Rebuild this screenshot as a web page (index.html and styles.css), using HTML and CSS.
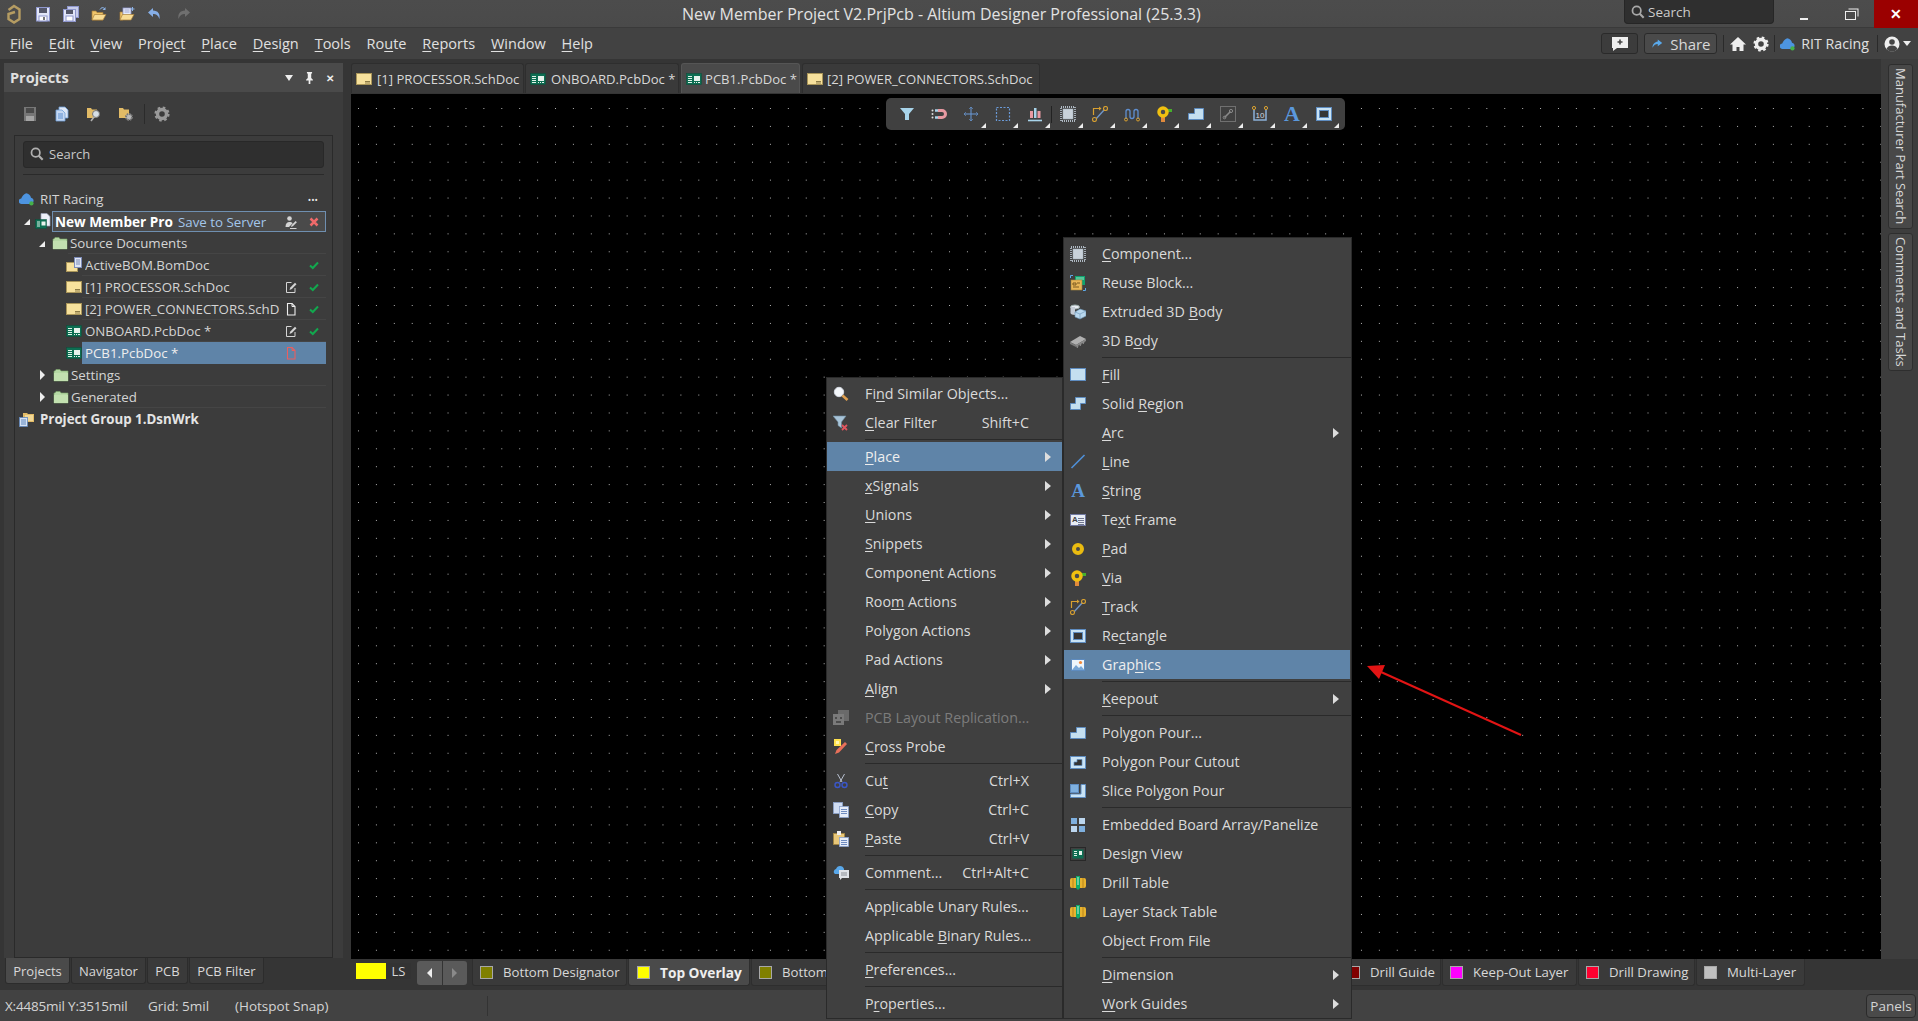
FILE: index.html
```html
<!DOCTYPE html>
<html lang="en">
<head>
<meta charset="utf-8">
<title>New Member Project V2.PrjPcb - Altium Designer Professional (25.3.3)</title>
<link rel="stylesheet" href="styles.css">
</head>
<body>
<svg class="defs" aria-hidden="true">
  <symbol id="logo" viewBox="0 0 14 20"><path d="M1.500 6 7 2l5.500 3.500v9.500L7 18.500 1.500 15v-5L8 8" fill="none" stroke="#b59c62" stroke-width="2.400"/></symbol>
  <symbol id="save" viewBox="0 0 16 16"><rect x="1.500" y="1.500" width="13" height="13.500" fill="#e2e6f8" stroke="#8e96cc"/><rect x="4" y="2" width="8" height="5" fill="#55586a"/><rect x="4" y="10" width="8" height="5" fill="#fff" stroke="#8e96cc"/><rect x="8" y="11" width="2" height="3" fill="#777"/></symbol>
  <symbol id="saveall" viewBox="0 0 16 16"><rect x="4.500" y=".5" width="11" height="11" fill="#c8cdea" stroke="#8e96cc"/><rect x=".5" y="3.500" width="12" height="12" fill="#e2e6f8" stroke="#8e96cc"/><rect x="3" y="4" width="7" height="4" fill="#55586a"/><rect x="3" y="10" width="7" height="5" fill="#fff" stroke="#8e96cc"/></symbol>
  <symbol id="fopen" viewBox="0 0 16 16"><path d="M1 14V5h4l1 1.500h6V14Z" fill="#f0c56a" stroke="#a9803a" stroke-width=".7"/><path d="M1 14l2.500-5.500H15L12 14Z" fill="#f8dc95" stroke="#a9803a" stroke-width=".7"/><path d="M9 3.500c1-2 3-2.500 4.500-1" fill="none" stroke="#8cb4e8" stroke-width="1"/><path d="M14.500 1v3h-3Z" fill="#8cb4e8"/></symbol>
  <symbol id="fopen2" viewBox="0 0 16 16"><path d="M1 14V6h3v8Z" fill="#f0c56a" stroke="#a9803a" stroke-width=".7"/><rect x="4" y="2" width="8" height="8" fill="#e8ecf8" stroke="#8e96cc" stroke-width=".8"/><path d="M5.500 4h5M5.500 6h5" stroke="#8e96cc" stroke-width=".8"/><path d="M1 14l2.500-5.500H15L12 14Z" fill="#f8dc95" stroke="#a9803a" stroke-width=".7"/><path d="M13.500 1v4M11.500 3h4" stroke="#8cb4e8"/></symbol>
  <symbol id="undo" viewBox="0 0 16 16"><path d="M6 2 1 6.500 6 11V8c3 0 5 1 6.500 5 .8-5-1.500-8.500-6.500-8.500Z" fill="#86aee6"/></symbol>
  <symbol id="redo" viewBox="0 0 16 16"><path d="M10 2l5 4.500L10 11V8c-3 0-5 1-6.500 5-.8-5 1.500-8.500 6.500-8.500Z" fill="#6f6f6f"/></symbol>
  <symbol id="psave" viewBox="0 0 16 16"><rect x="2" y="1" width="12" height="14" fill="#777"/><rect x="4" y="2" width="8" height="5" fill="#4a4a4a"/><rect x="4" y="10" width="8" height="5" fill="#a5a5a5"/></symbol>
  <symbol id="pdocs" viewBox="0 0 16 16"><path d="M5 1h6l3 3v8H5Z" fill="#dfe8f6" stroke="#6e9fd8" stroke-width=".8"/><path d="M2 4h6l3 3v8H2Z" fill="#c5d8f2" stroke="#6e9fd8" stroke-width=".8"/><path d="M4 8h5M4 10h5M4 12h5" stroke="#5c8fd0"/></symbol>
  <symbol id="fsearch" viewBox="0 0 16 16"><path d="M1 12V2h4l1 1.500h5V12Z" fill="#e2bb66"/><circle cx="10" cy="8" r="3.500" fill="#d6dfe6" stroke="#777"/><path d="M8 11 5 15" stroke="#b0b0b0" stroke-width="1.600"/></symbol>
  <symbol id="fgear" viewBox="0 0 16 16"><path d="M1 12V2h4l1 1.500h5V12Z" fill="#e2bb66"/><circle cx="11" cy="11" r="3" fill="#bbb" stroke="#777" stroke-width="2" stroke-dasharray="1.500 .8"/><circle cx="11" cy="11" r="1.500" fill="#bbb"/></symbol>
  <symbol id="gear" viewBox="0 0 16 16"><circle cx="8" cy="8" r="4.500" fill="none" stroke="currentColor" stroke-width="3.400"/><circle cx="8" cy="8" r="6.500" fill="none" stroke="currentColor" stroke-width="2.200" stroke-dasharray="2.600 2.500"/></symbol>
  <symbol id="search" viewBox="0 0 16 16"><circle cx="6.500" cy="6.500" r="4.800" fill="none" stroke="currentColor" stroke-width="2"/><path d="M10 10l4.500 4.500" stroke="currentColor" stroke-width="2.400"/></symbol>
  <symbol id="cloud" viewBox="0 0 18 16"><path d="M3 13.500a3 3 0 0 1-.5-6C3.500 5 5 2.500 8 1.500c3 0 5 2.500 5.500 5a3.500 3.500 0 0 1 2.500 5 2.500 2.500 0 0 1-1.500 2Z" fill="#4d94e0"/><circle cx="14" cy="13" r="2.400" fill="#45b04a"/></symbol>
  <symbol id="pcb" viewBox="0 0 16 16"><rect x=".5" y="2.500" width="15" height="11" fill="#0d6e52" stroke="#0b4e3a" stroke-width=".5"/><path d="M2 5h4v1H2Zm0 2h4v1H2Zm0 2h4v1H2Zm0 2h4v1H2Z" fill="#dff2e8"/><rect x="8" y="5" width="6" height="5" fill="#e6f2ec"/><path d="M8 11.500h1M10 11.500h1M12 11.500h2" stroke="#e6f2ec"/></symbol>
  <symbol id="sch" viewBox="0 0 16 16"><rect x=".5" y="2.500" width="15" height="11" fill="#f7e19c" stroke="#a99559"/><path d="M9 10.500h5M9 12h5" stroke="#8c7b46"/></symbol>
  <symbol id="bom" viewBox="0 0 16 16"><rect x=".5" y="5.500" width="11" height="9" fill="#f7e19c" stroke="#a99559"/><rect x="8.500" y=".5" width="7" height="10" fill="#dfe6f4" stroke="#7d8bb8"/><path d="M10 3h4M10 5h4M10 7h4" stroke="#7d8bb8"/></symbol>
  <symbol id="prj" viewBox="0 0 16 16"><path d="M6 .5h6l3 3V13H6Z" fill="#eef0f8" stroke="#9aa2b8" stroke-width=".7"/><rect x=".5" y="6.500" width="11" height="9" fill="#0d6e52" stroke="#0b4e3a" stroke-width=".5"/><path d="M2 8.500h3v1H2Zm0 2h3v1H2Zm0 2h3v1H2Z" fill="#dff2e8"/><rect x="6.500" y="8.500" width="4" height="4" fill="#e6f2ec"/></symbol>
  <symbol id="grp" viewBox="0 0 16 16"><path d="M4 10V2h4l1 1h6v8H4Z" fill="#e2bb66"/><rect x="6" y="4" width="8" height="6" fill="#f2d896"/><rect x=".5" y="6.500" width="8" height="9" fill="#d5e2f4" stroke="#5f86bb" stroke-width=".8"/><path d="M2 9h5M2 11h5M2 13h5" stroke="#5f86bb"/></symbol>
  <symbol id="folder" viewBox="0 0 16 16"><path d="M1 14V4h1l1-1.500h4L8 4h7v10Z" fill="#b5d8a4" stroke="#7ba56a" stroke-width=".6"/><path d="M1 14V6h14v8Z" fill="#c2e0b0"/></symbol>
  <symbol id="check" viewBox="0 0 16 16"><path d="M4 8.500 6.800 11 12 5.500" fill="none" stroke="#12a84e" stroke-width="2"/></symbol>
  <symbol id="pendoc" viewBox="0 0 16 16"><path d="M8.500 3.500H3.500v10h8.500V9" fill="none" stroke="#d4d4d4" stroke-width="1"/><path d="M6.500 11l.8-2.500L12 3.800l1.500 1.500L8.800 10Z" fill="#d4d4d4"/></symbol>
  <symbol id="doc" viewBox="0 0 16 16"><path d="M4.500 2.500h4.500l3 3v8.500h-7.500Z" fill="none" stroke="currentColor" stroke-width="1.100"/><path d="M9 2.500V5.500h3" fill="none" stroke="currentColor" stroke-width="1"/></symbol>
  <symbol id="userpen" viewBox="0 0 16 16"><circle cx="6.500" cy="4.500" r="2.300" fill="#d4d4d4"/><path d="M2.500 13c0-3.500 1.500-5 4-5 1.500 0 2.500.4 3.200 1.200L6 13Z" fill="#d4d4d4"/><path d="M8 13l.6-2 4-4 1.300 1.300-4 4Z" fill="#d4d4d4"/><path d="M7 14.500h6.500" stroke="#d4d4d4"/></symbol>
  <symbol id="xred" viewBox="0 0 16 16"><path d="M4.500 4.500l7 7M11.500 4.500l-7 7" stroke="#ef6a6a" stroke-width="2.500"/></symbol>
  <symbol id="find" viewBox="0 0 16 16"><circle cx="6" cy="6" r="4.700" fill="#f4f7fb" stroke="#d6dbe4"/><path d="M9.500 9.500l5 4.500" stroke="#e0a050" stroke-width="2.600"/></symbol>
  <symbol id="clearf" viewBox="0 0 16 16"><path d="M0 1h13L8.500 7v6L5 10.500V7Z" fill="#a8c4d8" stroke="#6d8ba0" stroke-width=".6"/><path d="M9 10l5 5M14 10l-5 5" stroke="#e0555f" stroke-width="1.800"/></symbol>
  <symbol id="probe" viewBox="0 0 16 16"><path d="M2 15l1.500-4L12 3l2 2-8 8.500Z" fill="#e8705a"/><rect x="1" y="0" width="7" height="7" fill="#ffe14d"/><rect x="3" y="2" width="3" height="3" fill="#fff6b0"/></symbol>
  <symbol id="cut" viewBox="0 0 16 16"><path d="M4.500 1 9 9M11.500 1 7 9" stroke="#b8c0d0" stroke-width="1"/><circle cx="4.500" cy="12" r="2.500" fill="none" stroke="#3a56c8" stroke-width="1.400"/><circle cx="11.500" cy="12" r="2.500" fill="none" stroke="#3a56c8" stroke-width="1.400"/></symbol>
  <symbol id="copy" viewBox="0 0 16 16"><rect x=".5" y=".5" width="9" height="11" fill="#cfdcf2" stroke="#8aa2cc" stroke-width=".8"/><rect x="6.500" y="4.500" width="9" height="11" fill="#e6edf9" stroke="#8aa2cc" stroke-width=".8"/><path d="M8 7.500h6M8 9.500h6M8 11.500h6" stroke="#6f8cc0"/></symbol>
  <symbol id="paste" viewBox="0 0 16 16"><rect x=".5" y="2.500" width="11" height="11" fill="#e8c779" stroke="#a5853d" stroke-width=".8"/><rect x="4" y="0" width="4" height="4" fill="#eee"/><rect x="6.500" y="6.500" width="9" height="9" fill="#e6edf9" stroke="#8aa2cc" stroke-width=".8"/><path d="M8 9.500h6M8 11.500h6M8 13.500h6" stroke="#6f8cc0"/></symbol>
  <symbol id="comment" viewBox="0 0 16 16"><path d="M1 8a3 3 0 0 1 2-4c.8-2 2-3 4-3s3.500 1 4 3v5H2Z" fill="#59a8ea"/><path d="M6 5h10v8h-7l-2 2v-2H6Z" fill="#dfe3e8"/><path d="M8 8h6M8 10h6" stroke="#8a8f96"/></symbol>
  <symbol id="rep" viewBox="0 0 16 16"><rect x="5" y="0" width="11" height="11" fill="#6a6a6a"/><rect x="0" y="4" width="11" height="11" fill="#7a7a7a"/><path d="M2 7h2v2H2Zm5 0h2v2H7ZM3 11h5v2H3Z" fill="#4c4c4c"/></symbol>
  <symbol id="comp" viewBox="0 0 16 16"><rect x="3" y="3" width="10" height="10" fill="#c9d2da" stroke="#a9b4be" stroke-width=".6"/><rect x="1" y="1" width="14" height="14" fill="none" stroke="#aeb8c2" stroke-width="1.800" stroke-dasharray="1 1"/></symbol>
  <symbol id="reuse" viewBox="0 0 16 16"><rect x="5" y="1" width="10" height="9" fill="#0fa36f"/><path d="M7 2v3M9 2v3M11 2v3M13 2v3" stroke="#9fe8c6"/><rect x="1" y="5" width="11" height="10" fill="#e8b658" stroke="#a5853d" stroke-width=".6"/><path d="M3 8h3v2H3Zm4 0h3M3 12h6" stroke="#7a5a20" fill="none"/><path d="M.5 3V.5H3M13 15.500h2.500V13" fill="none" stroke="#5ea8e8"/></symbol>
  <symbol id="extr" viewBox="0 0 16 16"><ellipse cx="5" cy="3" rx="4.500" ry="2" fill="#e8ecf2" stroke="#9aa"/><path d="M.5 3v6c0 1 2 2 4.500 2V3Z" fill="#c5ccd6"/><path d="M5 8l5-3 6 2v5l-6 3-5-2Z" fill="#b9d8ee" stroke="#6b93b5" stroke-width=".6"/><path d="M5 8l5 2 6-3M10 10v5" stroke="#6b93b5" stroke-width=".6" fill="none"/></symbol>
  <symbol id="body3d" viewBox="0 0 16 16"><path d="M0 9l10-6 6 3-10 6Z" fill="#b0b0b0"/><path d="M0 9l6 3v2L0 11Z" fill="#7a7a7a"/><path d="M6 12l10-6v2L6 14Z" fill="#8a8a8a"/><path d="M7 15l1-2M10 13l1-2M13 11l1-2" stroke="#9a9a9a"/></symbol>
  <symbol id="fill" viewBox="0 0 16 16"><rect x=".5" y="1.500" width="15" height="12" fill="#c4dff0" stroke="#5e8cc0"/></symbol>
  <symbol id="solid" viewBox="0 0 16 16"><path d="M5.500 1.500h10v6h-5v6H.5v-6h5Z" fill="#c4dff0" stroke="#5e8cc0"/></symbol>
  <symbol id="line" viewBox="0 0 16 16"><path d="M1.500 14 14.500 1" stroke="#4f8fd8" stroke-width="1.600"/></symbol>
  <symbol id="pad" viewBox="0 0 16 16"><circle cx="8" cy="8" r="4" fill="#4a4a4a" stroke="#eabb10" stroke-width="4"/></symbol>
  <symbol id="via" viewBox="0 0 16 16"><rect x="5" y="10" width="4" height="6" fill="#e08a3c"/><rect x="11" y="3" width="5" height="3" fill="#46b02c"/><circle cx="7" cy="6" r="4" fill="#4a4a4a" stroke="#f0c010" stroke-width="3.500"/></symbol>
  <symbol id="track" viewBox="0 0 16 16"><path d="M3 14 13 3" stroke="#6f95c8" stroke-width="1.400"/><circle cx="2.500" cy="13.500" r="2" fill="#444" stroke="#d8a030" stroke-width="1.100"/><circle cx="13.500" cy="2.500" r="2" fill="#444" stroke="#d8a030" stroke-width="1.100"/><path d="M1.500 9V2.500H7" fill="none" stroke="#d8a030" stroke-width="1.200"/><path d="M7 .5v4l2.500-2Z" fill="#d8a030"/></symbol>
  <symbol id="rect" viewBox="0 0 16 16"><rect x=".5" y="1.500" width="15" height="13" fill="#c9e3f5" stroke="#5e8cc0"/><rect x="3.500" y="4.500" width="9" height="7" fill="#353535" stroke="#5e8cc0"/></symbol>
  <symbol id="gfx" viewBox="0 0 16 16"><rect x="1.500" y="2.500" width="13" height="11" fill="#eef6fc" stroke="#5e8cc0"/><circle cx="10.500" cy="5.500" r="1.600" fill="#f28a3c"/><path d="M2 13l4-5 3 3 2-2 3.500 4Z" fill="#78a8d8"/></symbol>
  <symbol id="ppour" viewBox="0 0 16 16"><path d="M.5 13.500v-6h6v-5h9v11Z" fill="#c4dff0" stroke="#5e8cc0"/></symbol>
  <symbol id="pcut" viewBox="0 0 16 16"><rect x=".5" y="2.500" width="15" height="12" fill="#c9e3f5" stroke="#5e8cc0"/><path d="M4 11.500V8h3V5.500h5v6Z" fill="#333" stroke="#5e8cc0" stroke-width=".7"/></symbol>
  <symbol id="slice" viewBox="0 0 16 16"><rect x=".5" y="1.500" width="8" height="8" fill="#7fb0df" stroke="#5e8cc0"/><path d="M11 1.500h4.500v13H.5V11H11Z" fill="#c9e3f5" stroke="#5e8cc0"/></symbol>
  <symbol id="array" viewBox="0 0 16 16"><rect x="1" y="1" width="6" height="6" fill="#7fb0df"/><rect x="9" y="1" width="6" height="6" fill="#bcd6ee"/><rect x="1" y="9" width="6" height="6" fill="#bcd6ee"/><rect x="9" y="9" width="6" height="6" fill="#7fb0df"/></symbol>
  <symbol id="dview" viewBox="0 0 16 16"><rect x=".5" y="1.500" width="15" height="13" fill="none" stroke="#111" stroke-dasharray="1 1"/><rect x="2.500" y="3.500" width="11" height="9" fill="#0d6e52"/><path d="M4 5.500h3M4 7.500h3M4 9.500h3" stroke="#dff2e8"/><rect x="9" y="5" width="3" height="4" fill="#e6f2ec"/></symbol>
  <symbol id="drill" viewBox="0 0 16 16"><rect x="0" y="3" width="16" height="10" rx="2" fill="#e9b32f"/><path d="M3 3v10M13 3v10" stroke="#b8851a"/><path d="M6 1h4v12l-2 2-2-2Z" fill="#0faa6b"/><path d="M7 3h2M7 5h2M7 7h2M7 9h2" stroke="#c8f5e0"/></symbol>
  <symbol id="funnel" viewBox="0 0 16 16"><path d="M1 2h14L10 8v6H6V8Z" fill="#a8d4ea"/></symbol>
  <symbol id="magnet" viewBox="0 0 16 16"><path d="M7 3h4a5 5 0 0 1 0 10H7v-3h4a2 2 0 0 0 0-4H7Z" fill="#e89aa2"/><path d="M4 4.500h3M4 11.500h3" stroke="#a8d4ea" stroke-width="2.600"/><circle cx="1.500" cy="4.500" r="1" fill="#ddd"/><circle cx="1.500" cy="8" r="1" fill="#ddd"/><circle cx="1.500" cy="11.500" r="1" fill="#ddd"/></symbol>
  <symbol id="cross" viewBox="0 0 16 16"><path d="M8 1v14M1 8h14" stroke="#6a9ad8" stroke-width="1"/><path d="M6 3l2-2 2 2M6 13l2 2 2-2M3 6 1 8l2 2M13 6l2 2-2 2" fill="none" stroke="#6a9ad8" stroke-width=".6"/></symbol>
  <symbol id="dash" viewBox="0 0 16 16"><rect x="1.500" y="1.500" width="13" height="13" fill="none" stroke="#6a9ad8" stroke-width="1.200" stroke-dasharray="2 1.500"/></symbol>
  <symbol id="align" viewBox="0 0 16 16"><rect x="3" y="5" width="3" height="7" fill="#e89aa2"/><rect x="7" y="2" width="2.500" height="10" fill="#a8d4ea"/><rect x="10.500" y="5" width="3" height="7" fill="#e89aa2"/><path d="M1 14.500h14" stroke="#a8d4ea" stroke-width="1.600"/></symbol>
  <symbol id="wiggle" viewBox="0 0 16 16"><path d="M2 13V5.500a2 2 0 0 1 4 0v5a2 2 0 0 0 4 0v-5a2 2 0 0 1 4 0V13" fill="none" stroke="#5f8fd0" stroke-width="1.300"/><circle cx="2" cy="13.500" r="1.500" fill="none" stroke="#d8a030"/><circle cx="14" cy="13.500" r="1.500" fill="none" stroke="#d8a030"/></symbol>
  <symbol id="wrench" viewBox="0 0 16 16"><rect x=".5" y=".5" width="15" height="15" fill="none" stroke="#707070"/><path d="M4.500 11.500l6-6" stroke="#8a8a8a" stroke-width="1.600"/><circle cx="11" cy="5" r="1.600" fill="none" stroke="#8a8a8a"/><circle cx="4.500" cy="11.500" r="1.300" fill="none" stroke="#8a8a8a"/></symbol>
  <symbol id="dim" viewBox="0 0 16 16"><path d="M2 3v11h12V3" fill="none" stroke="#8ab0d8" stroke-width="1.500"/><circle cx="2" cy="2" r="1.600" fill="#444" stroke="#d8a030"/><circle cx="14" cy="2" r="1.600" fill="#444" stroke="#d8a030"/><text x="8" y="11.500" font-size="8" fill="#d0d8e0" text-anchor="middle" font-family="Liberation Sans">10</text></symbol>
  <symbol id="home" viewBox="0 0 16 16"><path d="M8 1 0 8.500h2.500V15h4v-4h3v4h4V8.500H16Z" fill="#eee"/></symbol>
  <symbol id="bubble" viewBox="0 0 16 16"><path d="M0 1h16v11H5l-4 3v-3H0Z" fill="#eee"/><path d="M8 3.500v5M5.500 6h5" stroke="#444" stroke-width="1.600"/></symbol>
  <symbol id="share" viewBox="0 0 16 16"><path d="M9 2l6 4.500L9 11V8c-3 0-5 1-7 5 0-5 3-8 7-8.500Z" fill="#59a8ea"/></symbol>
  <symbol id="user" viewBox="0 0 16 16"><circle cx="8" cy="8" r="7.500" fill="#eee"/><circle cx="8" cy="6" r="2.800" fill="#444"/><path d="M2.500 13c1-2.500 3-3.500 5.500-3.500s4.500 1 5.500 3.500a7 7 0 0 1-11 0Z" fill="#444"/></symbol>
</svg>

<header class="titlebar">
  <div class="qa">
    <svg class="q-logo"><use href="#logo"/></svg>
    <svg class="qi q1"><use href="#save"/></svg>
    <svg class="qi"><use href="#saveall"/></svg>
    <svg class="qi"><use href="#fopen"/></svg>
    <svg class="qi"><use href="#fopen2"/></svg>
    <svg class="qi"><use href="#undo"/></svg>
    <svg class="qi"><use href="#redo"/></svg>
  </div>
  <div class="title">New Member Project V2.PrjPcb - Altium Designer Professional (25.3.3)</div>
  <div class="topsearch"><svg class="ic14"><use href="#search"/></svg><span>Search</span></div>
  <div class="winbtn"><span class="w-min"></span></div>
  <div class="winbtn"><span class="w-max"></span></div>
  <div class="winbtn w-close">✕</div>
</header>

<nav class="menubar">
  <div class="menus">
    <span><u>F</u>ile</span><span><u>E</u>dit</span><span><u>V</u>iew</span><span>Proje<u>c</u>t</span><span><u>P</u>lace</span><span><u>D</u>esign</span><span><u>T</u>ools</span><span>Ro<u>u</u>te</span><span><u>R</u>eports</span><span><u>W</u>indow</span><span><u>H</u>elp</span>
  </div>
  <div class="mb-right">
    <button class="mb-btn mb-comment"><svg class="ic16"><use href="#bubble"/></svg></button>
    <button class="mb-btn mb-share"><svg class="ic12"><use href="#share"/></svg>Share</button>
    <i class="mb-sep"></i>
    <svg class="ic16 m-home"><use href="#home"/></svg>
    <svg class="ic16 m-gear"><use href="#gear"/></svg>
    <i class="mb-sep"></i>
    <svg class="ic16 m-cloud"><use href="#cloud"/></svg>
    <span class="mb-rit">RIT Racing</span>
    <i class="mb-sep"></i>
    <svg class="ic16 m-user"><use href="#user"/></svg>
    <span class="caret-d"></span>
  </div>
</nav>

<main class="main">
  <aside class="leftcol">
    <section class="panel">
      <div class="panel-head">
        <span class="panel-title">Projects</span>
        <span class="ph-tri"></span>
        <svg class="ph-pin" viewBox="0 0 10 14"><path d="M2 0h6v1.500L7 2v5l2 2v1H6v4H4v-4H1V9l2-2V2L2 1.500Z" fill="#eee"/></svg>
        <span class="ph-x">✕</span>
      </div>
      <div class="panel-tools">
        <svg class="ic16 pt1"><use href="#psave"/></svg>
        <svg class="ic16 pt"><use href="#pdocs"/></svg>
        <svg class="ic16 pt"><use href="#fsearch"/></svg>
        <svg class="ic16 pt"><use href="#fgear"/></svg>
        <i class="pt-sep"></i>
        <svg class="ic16 pt-gear"><use href="#gear"/></svg>
      </div>
      <div class="inner">
        <div class="psearch"><svg class="ic14"><use href="#search"/></svg><span>Search</span></div>
        <div class="inner-line"></div>
        <div class="tree">
          <div class="row lv0"><svg class="ic16"><use href="#cloud"/></svg><span class="label plain">RIT Racing</span><span class="dots">•••</span></div>
          <div class="row lv1"><span class="tri-open"></span><svg class="ic16 lv1-ic"><use href="#prj"/></svg>
            <div class="selbox"><b class="selname">New Member Pro</b><span class="savesrv">Save to Server</span><svg class="st s1"><use href="#userpen"/></svg><svg class="st s2"><use href="#xred"/></svg></div></div>
          <div class="row lv2"><span class="tri-open"></span><svg class="ic16 lv2-ic"><use href="#folder"/></svg><span class="label">Source Documents</span></div>
          <div class="row lv3"><svg class="ic16"><use href="#bom"/></svg><div class="label"><span class="nm">ActiveBOM.BomDoc</span><i class="st s1"></i><svg class="st s2"><use href="#check"/></svg></div></div>
          <div class="row lv3"><svg class="ic16"><use href="#sch"/></svg><div class="label"><span class="nm">[1] PROCESSOR.SchDoc</span><svg class="st s1"><use href="#pendoc"/></svg><svg class="st s2"><use href="#check"/></svg></div></div>
          <div class="row lv3"><svg class="ic16"><use href="#sch"/></svg><div class="label"><span class="nm">[2] POWER_CONNECTORS.SchD</span><svg class="st s1 c-white"><use href="#doc"/></svg><svg class="st s2"><use href="#check"/></svg></div></div>
          <div class="row lv3"><svg class="ic16"><use href="#pcb"/></svg><div class="label"><span class="nm">ONBOARD.PcbDoc *</span><svg class="st s1"><use href="#pendoc"/></svg><svg class="st s2"><use href="#check"/></svg></div></div>
          <div class="row lv3"><svg class="ic16"><use href="#pcb"/></svg><div class="label sel"><span class="nm">PCB1.PcbDoc *</span><svg class="st s1 c-red"><use href="#doc"/></svg><i class="st s2"></i></div></div>
          <div class="row lv2"><span class="tri-closed"></span><svg class="ic16 lv2-ic"><use href="#folder"/></svg><span class="label">Settings</span></div>
          <div class="row lv2"><span class="tri-closed"></span><svg class="ic16 lv2-ic"><use href="#folder"/></svg><span class="label">Generated</span></div>
          <div class="row lv0"><svg class="ic16"><use href="#grp"/></svg><b class="label plain grpname">Project Group 1.DsnWrk</b></div>
        </div>
      </div>
    </section>
    <div class="ptabs">
      <span class="ptab on pt-a">Projects</span><span class="ptab pt-b">Navigator</span><span class="ptab pt-c">PCB</span><span class="ptab pt-d">PCB Filter</span>
    </div>
  </aside>

  <div class="center">
    <div class="doctabs">
      <div class="dtab d1"><svg class="ic16"><use href="#sch"/></svg><span>[1] PROCESSOR.SchDoc</span></div>
      <div class="dtab d2"><svg class="ic16"><use href="#pcb"/></svg><span>ONBOARD.PcbDoc *</span></div>
      <div class="dtab d3 on"><svg class="ic16"><use href="#pcb"/></svg><span>PCB1.PcbDoc *</span></div>
      <div class="dtab d4"><svg class="ic16"><use href="#sch"/></svg><span>[2] POWER_CONNECTORS.SchDoc</span></div>
    </div>
    <div class="canvas">
      <svg class="griddots" aria-hidden="true"><defs><pattern id="dots" x="7" y="14" width="17.910" height="17.910" patternUnits="userSpaceOnUse"><rect width="1" height="1" fill="#b4b4b4" shape-rendering="crispEdges"/></pattern></defs><rect width="100%" height="100%" fill="url(#dots)"/></svg>
      <div class="cbar">
        <span class="cb"><svg class="ic16"><use href="#funnel"/></svg></span>
        <span class="cb"><svg class="ic16"><use href="#magnet"/></svg></span>
        <span class="cb m"><svg class="ic16"><use href="#cross"/></svg></span>
        <span class="cb m"><svg class="ic16"><use href="#dash"/></svg></span>
        <span class="cb m cb-last"><svg class="ic16"><use href="#align"/></svg></span>
        <i class="cb-sep"></i>
        <span class="cb m"><svg class="ic16"><use href="#comp"/></svg></span>
        <span class="cb m"><svg class="ic16"><use href="#track"/></svg></span>
        <span class="cb m"><svg class="ic16"><use href="#wiggle"/></svg></span>
        <span class="cb m"><svg class="ic16"><use href="#via"/></svg></span>
        <span class="cb m"><svg class="ic16"><use href="#ppour"/></svg></span>
        <span class="cb m"><svg class="ic16"><use href="#wrench"/></svg></span>
        <span class="cb m"><svg class="ic16"><use href="#dim"/></svg></span>
        <span class="cb m"><span class="ic-a big">A</span></span>
        <span class="cb m"><svg class="ic16"><use href="#rect"/></svg></span>
      </div>
    </div>
    <div class="layerbar">
      <span class="curlayer"></span><span class="ls">LS</span>
      <span class="nav"><span class="nav-l"></span><i></i><span class="nav-r"></span></span>
      <span class="ltab lt-a"><i class="sw olive"></i>Bottom Designator</span>
      <span class="ltab lt-b on"><i class="sw yellow"></i>Top Overlay</span>
      <span class="ltab lt-c"><i class="sw olive"></i>Bottom</span>
      <span class="ltab lt-d"><i class="sw dred"></i>Drill Guide</span>
      <span class="ltab lt-e"><i class="sw magenta"></i>Keep-Out Layer</span>
      <span class="ltab lt-f"><i class="sw red"></i>Drill Drawing</span>
      <span class="ltab lt-g"><i class="sw grey"></i>Multi-Layer</span>
    </div>
  </div>

  <aside class="rightcol">
    <div class="vtab v1">Manufacturer Part Search</div>
    <div class="vtab v2">Comments and Tasks</div>
  </aside>
</main>

<footer class="status">
  <span class="st-xy">X:4485mil Y:3515mil</span>
  <span class="st-grid">Grid: 5mil</span>
  <span class="st-snap">(Hotspot Snap)</span>
  <i class="st-sep"></i>
  <button class="panels">Panels</button>
</footer>

<div class="menu menu-l">
  <div class="mi"><svg class="mic"><use href="#find"/></svg><span class="mt">Fi<u>n</u>d Similar Objects...</span><i class="ma"></i></div>
  <div class="mi"><svg class="mic"><use href="#clearf"/></svg><span class="mt"><u>C</u>lear Filter</span><span class="ms">Shift+C</span><i class="ma"></i></div>
  <div class="msep"></div>
  <div class="mi hl"><i class="mic"></i><span class="mt"><u>P</u>lace</span><i class="ma ar"></i></div>
  <div class="mi"><i class="mic"></i><span class="mt"><u>x</u>Signals</span><i class="ma ar"></i></div>
  <div class="mi"><i class="mic"></i><span class="mt"><u>U</u>nions</span><i class="ma ar"></i></div>
  <div class="mi"><i class="mic"></i><span class="mt"><u>S</u>nippets</span><i class="ma ar"></i></div>
  <div class="mi"><i class="mic"></i><span class="mt">Compon<u>e</u>nt Actions</span><i class="ma ar"></i></div>
  <div class="mi"><i class="mic"></i><span class="mt">Roo<u>m</u> Actions</span><i class="ma ar"></i></div>
  <div class="mi"><i class="mic"></i><span class="mt">Poly<u>g</u>on Actions</span><i class="ma ar"></i></div>
  <div class="mi"><i class="mic"></i><span class="mt">Pad Actions</span><i class="ma ar"></i></div>
  <div class="mi"><i class="mic"></i><span class="mt"><u>A</u>lign</span><i class="ma ar"></i></div>
  <div class="mi dis"><svg class="mic"><use href="#rep"/></svg><span class="mt">PCB Layout Replication...</span><i class="ma"></i></div>
  <div class="mi"><svg class="mic"><use href="#probe"/></svg><span class="mt"><u>C</u>ross Probe</span><i class="ma"></i></div>
  <div class="msep"></div>
  <div class="mi"><svg class="mic"><use href="#cut"/></svg><span class="mt">Cu<u>t</u></span><span class="ms">Ctrl+X</span><i class="ma"></i></div>
  <div class="mi"><svg class="mic"><use href="#copy"/></svg><span class="mt"><u>C</u>opy</span><span class="ms">Ctrl+C</span><i class="ma"></i></div>
  <div class="mi"><svg class="mic"><use href="#paste"/></svg><span class="mt"><u>P</u>aste</span><span class="ms">Ctrl+V</span><i class="ma"></i></div>
  <div class="msep"></div>
  <div class="mi"><svg class="mic"><use href="#comment"/></svg><span class="mt">Comment...</span><span class="ms">Ctrl+Alt+C</span><i class="ma"></i></div>
  <div class="msep"></div>
  <div class="mi"><i class="mic"></i><span class="mt">App<u>l</u>icable Unary Rules...</span><i class="ma"></i></div>
  <div class="mi"><i class="mic"></i><span class="mt">Applicable <u>B</u>inary Rules...</span><i class="ma"></i></div>
  <div class="msep"></div>
  <div class="mi"><i class="mic"></i><span class="mt"><u>P</u>references...</span><i class="ma"></i></div>
  <div class="msep"></div>
  <div class="mi"><i class="mic"></i><span class="mt">P<u>r</u>operties...</span><i class="ma"></i></div>
</div>

<div class="menu menu-r">
  <div class="mi"><svg class="mic"><use href="#comp"/></svg><span class="mt"><u>C</u>omponent...</span><i class="ma"></i></div>
  <div class="mi"><svg class="mic"><use href="#reuse"/></svg><span class="mt">Reuse Block...</span><i class="ma"></i></div>
  <div class="mi"><svg class="mic"><use href="#extr"/></svg><span class="mt">Extruded 3D <u>B</u>ody</span><i class="ma"></i></div>
  <div class="mi"><svg class="mic"><use href="#body3d"/></svg><span class="mt">3D B<u>o</u>dy</span><i class="ma"></i></div>
  <div class="msep"></div>
  <div class="mi"><svg class="mic"><use href="#fill"/></svg><span class="mt"><u>F</u>ill</span><i class="ma"></i></div>
  <div class="mi"><svg class="mic"><use href="#solid"/></svg><span class="mt">Solid <u>R</u>egion</span><i class="ma"></i></div>
  <div class="mi"><i class="mic"></i><span class="mt"><u>A</u>rc</span><i class="ma ar"></i></div>
  <div class="mi"><svg class="mic"><use href="#line"/></svg><span class="mt"><u>L</u>ine</span><i class="ma"></i></div>
  <div class="mi"><span class="mic ic-a">A</span><span class="mt"><u>S</u>tring</span><i class="ma"></i></div>
  <div class="mi"><span class="mic tframe"><span class="tf-a">A</span></span><span class="mt">Te<u>x</u>t Frame</span><i class="ma"></i></div>
  <div class="mi"><svg class="mic"><use href="#pad"/></svg><span class="mt"><u>P</u>ad</span><i class="ma"></i></div>
  <div class="mi"><svg class="mic"><use href="#via"/></svg><span class="mt"><u>V</u>ia</span><i class="ma"></i></div>
  <div class="mi"><svg class="mic"><use href="#track"/></svg><span class="mt"><u>T</u>rack</span><i class="ma"></i></div>
  <div class="mi"><svg class="mic"><use href="#rect"/></svg><span class="mt">Re<u>c</u>tangle</span><i class="ma"></i></div>
  <div class="mi hl"><svg class="mic"><use href="#gfx"/></svg><span class="mt">Grap<u>h</u>ics</span><i class="ma"></i></div>
  <div class="msep"></div>
  <div class="mi"><i class="mic"></i><span class="mt"><u>K</u>eepout</span><i class="ma ar"></i></div>
  <div class="msep"></div>
  <div class="mi"><svg class="mic"><use href="#ppour"/></svg><span class="mt">Poly<u>g</u>on Pour...</span><i class="ma"></i></div>
  <div class="mi"><svg class="mic"><use href="#pcut"/></svg><span class="mt">Polygon Pour Cutout</span><i class="ma"></i></div>
  <div class="mi"><svg class="mic"><use href="#slice"/></svg><span class="mt">Slice Polygon Pour</span><i class="ma"></i></div>
  <div class="msep"></div>
  <div class="mi"><svg class="mic"><use href="#array"/></svg><span class="mt">Embedded Board Array/Panelize</span><i class="ma"></i></div>
  <div class="mi"><svg class="mic"><use href="#dview"/></svg><span class="mt">Design View</span><i class="ma"></i></div>
  <div class="mi"><svg class="mic"><use href="#drill"/></svg><span class="mt">Drill Table</span><i class="ma"></i></div>
  <div class="mi"><svg class="mic"><use href="#drill"/></svg><span class="mt">Layer Stack Table</span><i class="ma"></i></div>
  <div class="mi"><i class="mic"></i><span class="mt">Object From File</span><i class="ma"></i></div>
  <div class="msep"></div>
  <div class="mi"><i class="mic"></i><span class="mt"><u>D</u>imension</span><i class="ma ar"></i></div>
  <div class="mi"><i class="mic"></i><span class="mt"><u>W</u>ork Guides</span><i class="ma ar"></i></div>
</div>

<svg class="redarrow" viewBox="0 0 180 90"><path d="M154 73 14 10" stroke="#e21414" stroke-width="2"/><path d="M0 4 18 3 12 17Z" fill="#e21414"/></svg>
</body>
</html>
```

FILE: styles.css
```css
* { box-sizing: border-box; }
html, body { margin: 0; height: 100%; }
body {
  width: 1918px; height: 1021px; overflow: hidden; position: relative;
  display: flex; flex-direction: column;
  background: #333;
  font-family: "Open Sans", "Noto Sans", "Liberation Sans", sans-serif;
  font-size: 14px; color: #d8d8d8;
}
.defs { position: absolute; width: 0; height: 0; }
svg { display: block; flex: none; overflow: visible; }
i { display: block; flex: none; }
u { text-underline-offset: 2px; text-decoration-thickness: 1px; }
button { font: inherit; color: inherit; }
.ic12 { width: 12px; height: 12px; }
.ic14 { width: 14px; height: 14px; color: #a8a8a8; }
.ic16 { width: 16px; height: 16px; }

/* title bar */
.titlebar {
  height: 28px; flex: none; display: flex; align-items: center;
  background: linear-gradient(#4c4c4c, #4a4a4a);
  border-bottom: 1px solid #3a3a3a;
  position: relative;
}
.qa { display: flex; align-items: center; padding-left: 7px; width: 682px; }
.q-logo { width: 14px; height: 20px; margin-right: 14px; }
.qi { width: 16px; height: 16px; margin-right: 12px; }
.title { font-size: 16px; color: #e2e2e2; width: 942px; white-space: nowrap; }
.topsearch {
  width: 150px; height: 24px; align-self: flex-start; flex: none; background: #2f2f2f;
  border: 1px solid #262626; border-top: 0; border-radius: 0 0 4px 4px; margin-right: 6px;
  display: flex; align-items: center; gap: 3px; padding-left: 6px; font-size: 13.5px; color: #ccc;
}
.winbtn { width: 47px; height: 28px; flex: none; display: flex; align-items: center; justify-content: center; color: #fff; }
.w-min { width: 8px; height: 2px; background: #eee; margin-top: 10px; }
.w-max { width: 11px; height: 9px; border: 1.500px solid #eee; position: relative; margin-top: 3px; box-shadow: 2px -2px 0 -0.5px #4a4a4a, 3px -3px 0 -0.5px #eee; }
.w-close { width: 44px; background: #9b0000; font-size: 14px; font-weight: 700; margin-left: auto; }

/* menu bar */
.menubar { height: 31px; flex: none; display: flex; align-items: center; background: #424242; }
.menus { display: flex; padding-left: 10px; font-size: 14.500px; color: #e0e0e0; }
.menus span { margin-right: 15.900px; }
.mb-right { margin-left: auto; display: flex; align-items: center; }
.mb-btn { height: 21px; display: flex; align-items: center; justify-content: center; background: #3c3c3c; border: 1px solid #2a2a2a; border-radius: 3px; padding: 0; font-size: 15px; }
.mb-comment { width: 37px; margin-right: 6px; }
.mb-share { width: 73px; background: #4a4a4a; gap: 7px; }
.mb-sep { width: 1px; height: 17px; background: #2a2a2a; }
.mb-share + .mb-sep { margin-left: 6px; }
.m-home { margin-left: 6px; }
.m-gear { margin-left: 7px; margin-right: 5px; color: #eee; }
.m-cloud { margin-left: 5px; }
.mb-rit { margin-left: 5px; margin-right: 8px; font-size: 14.200px; color: #e0e0e0; }
.m-user { margin-left: 6px; }
.caret-d { width: 0; height: 0; border: 4px solid transparent; border-top: 5px solid #eee; border-bottom: 0; margin: 0 7px 0 3px; }

/* main */
.main { flex: 1; display: flex; min-height: 0; background: #353535; }
.leftcol { width: 351px; flex: none; padding: 4px 8px 0 4px; display: flex; flex-direction: column; }
.panel { width: 339px; height: 895px; flex: none; background: #3c3c3c; display: flex; flex-direction: column; }
.panel-head { height: 29px; flex: none; background: #4a4a4a; display: flex; align-items: center; padding: 0 6px; }
.panel-title { font-weight: 700; font-size: 14.500px; color: #e0e0e0; margin-right: auto; }
.ph-tri { width: 0; height: 0; border: 4px solid transparent; border-top: 6px solid #eee; border-bottom: 0; margin-right: 12px; }
.ph-pin { width: 9px; height: 12px; margin-right: 12px; }
.ph-x { font-size: 10px; font-weight: 700; color: #eee; margin-right: 3px; }
.panel-tools { height: 43px; flex: none; display: flex; align-items: center; padding-left: 18px; }
.pt { margin-left: 16px; }
.pt-sep { width: 1px; height: 20px; background: #2b2b2b; margin-left: 10px; }
.pt-gear { margin-left: 9px; color: #999; }
.inner { margin: 0 10px; flex: 1; border: 1px solid #2a2a2a; padding: 5px 8px 0; }
.psearch { height: 27px; background: #2f2f2f; border: 1px solid #282828; border-radius: 3px; display: flex; align-items: center; gap: 5px; padding: 0 0 2px 6px; font-size: 13px; color: #c8c8c8; }
.psearch .ic14 { color: #b0b0b0; }
.inner-line { height: 1px; background: #2a2a2a; margin-top: 6px; }
.tree { margin: 13px -2px 0 -8px; }
.row { height: 22px; display: flex; align-items: center; font-size: 13.300px; color: #d4d4d4; }
.lv0 { padding-left: 4px; }
.lv1 { padding-left: 9px; }
.lv2 { padding-left: 24px; }
.lv3 { padding-left: 51px; }
.label { flex: 1; min-width: 0; height: 22px; display: flex; align-items: center; padding-left: 3px; border-bottom: 1px solid #454545; white-space: nowrap; }
.lv2 .label { padding-left: 2px; }
.label.plain { padding-left: 5px; border: 0; }
.grpname { font-weight: 700; color: #e4e4e4; }
.label.sel { background: #5f84a8; color: #eee; border-bottom: 0; }
.nm { flex: 1; min-width: 0; overflow: hidden; margin-right: 3px; }
.st { width: 16px; height: 16px; flex: none; }
.s1 { margin-right: 7px; }
.s2 { margin-right: 4px; }
.c-white { color: #eee; }
.c-red { color: #ea5f5f; }
.dots { font-size: 9px; margin-right: 8px; color: #eee; letter-spacing: 0; }
.tri-open { width: 0; height: 0; border-left: 6px solid transparent; border-bottom: 6px solid #eee; flex: none; margin-top: 2px; }
.tri-closed { width: 0; height: 0; margin-left: 1px; margin-right: 1px; border-left: 5px solid #eee; border-top: 5px solid transparent; border-bottom: 5px solid transparent; flex: none; }
.lv1-ic { margin-left: 5px; }
.lv2-ic { margin-left: 7px; margin-right: 0; }
.lv1 .selbox { margin-left: 1px; flex: 1; height: 21px; margin-top: 1px; background: #4a4a4a; border: 1px solid #6f8fb0; display: flex; align-items: center; padding-left: 2px; }
.selname { font-size: 13.600px; color: #fff; width: 123px; overflow: hidden; white-space: nowrap; flex: none; }
.savesrv { color: #a4c6ea; flex: 1; white-space: nowrap; font-size: 13.300px; }
.selbox .s2 { margin-right: 3px; }

.ptabs { display: flex; gap: 1px; margin-top: 0; height: 26px; font-size: 13px; padding-left: 1px; }
.ptab { display: flex; align-items: center; justify-content: center; padding-top: 1px; background: #3a3a3a; border: 1px solid #2c2c2c; border-top: 0; border-radius: 0 0 3px 3px; }
.ptab.on { background: #4a4a4a; }
.pt-a { width: 65px; }
.pt-b { width: 75px; }
.pt-c { width: 41px; }
.pt-d { width: 75px; }

/* center */
.center { width: 1530px; flex: none; display: flex; flex-direction: column; }
.doctabs { height: 35px; flex: none; display: flex; padding-top: 4px; }
.dtab { height: 30px; display: flex; align-items: center; gap: 5px; padding-left: 4px; font-size: 13.100px; background: #3a3a3a; border: 1px solid #2e2e2e; border-bottom: 0; border-radius: 3px 3px 0 0; white-space: nowrap; overflow: hidden; }
.dtab.on { background: #4a4a4a; border-color: #555; }
.d1 { width: 173px; margin-right: 1px; }
.d2 { width: 154px; margin-right: 2px; }
.d3 { width: 119px; margin-right: 2px; gap: 3px; }
.d4 { width: 238px; gap: 4px; }
.canvas { height: 865px; flex: none; position: relative; background: #000; }
.griddots { position: absolute; inset: 0; width: 100%; height: 100%; }
.cbar { position: absolute; left: 535px; top: 4px; height: 32px; width: 459px; display: flex; align-items: center; padding-left: 5px; background: #404040; border-radius: 5px; }
.cb { width: 32px; height: 32px; display: flex; align-items: center; justify-content: center; position: relative; }
.cb.m::after { content: ""; position: absolute; right: 1px; bottom: 2px; border-left: 5px solid transparent; border-bottom: 5px solid #eee; }
.cb-sep { width: 1px; height: 17px; background: #222; }
.ic-a { display: flex; width: 16px; height: 16px; align-items: center; justify-content: center; font-family: "Liberation Serif", serif; font-weight: 700; font-size: 19px; line-height: 16px; color: #5b98dc; }
.ic-a.big { font-size: 22px; }

.layerbar { height: 31px; flex: none; display: flex; align-items: flex-start; font-size: 13.200px; }
.curlayer { width: 30px; height: 16px; margin: 4px 0 0 5px; background: #ff0; }
.ls { width: 25px; height: 16px; margin-top: 4px; background: #333; display: flex; align-items: center; justify-content: center; font-size: 13px; }
.nav { width: 50px; height: 24px; margin: 2px 5px 0 6px; display: flex; align-items: center; background: #5a5a5a; border-radius: 3px; }
.nav i { width: 1px; height: 24px; background: #333; }
.nav-l, .nav-r { flex: 1; display: flex; justify-content: center; }
.nav-l::before { content: ""; border-right: 5px solid #eee; border-top: 5px solid transparent; border-bottom: 5px solid transparent; }
.nav-r::before { content: ""; border-left: 5px solid #8a8a8a; border-top: 5px solid transparent; border-bottom: 5px solid transparent; }
.ltab { height: 27px; display: flex; align-items: center; padding-left: 7px; white-space: nowrap; overflow: hidden; background: #3a3a3a; border: 1px solid #2e2e2e; border-top: 0; border-radius: 0 0 3px 3px; margin-right: 1px; flex: none; }
.ltab.on { background: #4a4a4a; font-weight: 700; color: #eee; font-size: 13.700px; }
.sw { width: 13px; height: 13px; margin-right: 10px; border: 1px solid #a8a8a8; }
.olive { background: #808000; }
.yellow { background: #ff0; }
.dred { background: #800000; }
.magenta { background: #f0f; }
.red { background: #ff0030; }
.grey { background: #c0c0c0; }
.lt-a { width: 155px; }
.lt-b { width: 122px; padding-left: 8px; }
.lt-c { width: 590px; }
.lt-d { width: 99px; padding-left: 4px; }
.lt-e { width: 135px; }
.lt-f { width: 117px; }
.lt-g { width: 109px; }

.rightcol { width: 37px; flex: none; background: #3d3d3d; padding: 5px 5px 0 7px; height: 900px; }
.vtab { writing-mode: vertical-rl; width: 25px; display: flex; align-items: center; justify-content: center; background: #484848; border: 1px solid #2e2e2e; border-radius: 3px; font-size: 13px; white-space: nowrap; }
.v1 { height: 165px; margin-bottom: 4px; }
.v2 { height: 138px; }

/* status */
.status { height: 31px; flex: none; display: flex; align-items: center; background: #424242; font-size: 13.500px; color: #d4d4d4; padding-left: 5px; }
.st-xy { width: 143px; letter-spacing: -.2px; }
.st-grid { width: 87px; }
.st-snap { width: 252px; }
.st-sep { width: 1px; height: 20px; background: #333; }
.panels { margin-left: auto; margin-right: 2px; width: 50px; height: 24px; padding: 0; background: #4a4a4a; border: 1px solid #2a2a2a; border-radius: 4px; font-size: 13.500px; }

/* context menus */
.menu { position: absolute; background: #404040; border: 1px solid #2a2a2a; font-size: 14.300px; color: #dadada; }
.menu-l { left: 826px; top: 377px; width: 237px; height: 642px; padding-top: 1px; }
.menu-r { left: 1063px; top: 237px; width: 289px; height: 782px; padding: 1px 1px 0 0; }
.mi { height: 29px; display: flex; align-items: center; padding: 0 9px 0 6px; white-space: nowrap; }
.mi.hl { background: #5f84a8; color: #eee; }
.mi.dis { color: #7c7c7c; }
.mic { width: 16px; height: 16px; flex: none; margin-right: 16px; }
.mt { flex: 1; }
.ms { margin-right: 16px; }
.ma { width: 8px; height: 10px; flex: none; }
.ma.ar { border-left: 6px solid #ddd; border-top: 5px solid transparent; border-bottom: 5px solid transparent; width: 0; margin-right: 2px; margin-left: 6px; }
.msep { height: 5px; padding-top: 2px; margin-left: 38px; }
.menu-r .msep { margin-right: -1px; }
.msep::before { content: ""; display: block; height: 1px; background: #2a2a2a; }
.tframe { height: 12px; background: repeating-linear-gradient(#e8edf5 0 1px, #6f7690 1px 2px) right 1px top 2px / 6px 8px no-repeat, #e8edf5; border: 1px solid #7078a0; position: relative; display: block; }
.tf-a { position: absolute; left: 1px; top: -1px; font: 700 8px/11px "Liberation Sans", sans-serif; color: #444; }
.redarrow { position: absolute; left: 1367px; top: 662px; width: 180px; height: 90px; }
```
